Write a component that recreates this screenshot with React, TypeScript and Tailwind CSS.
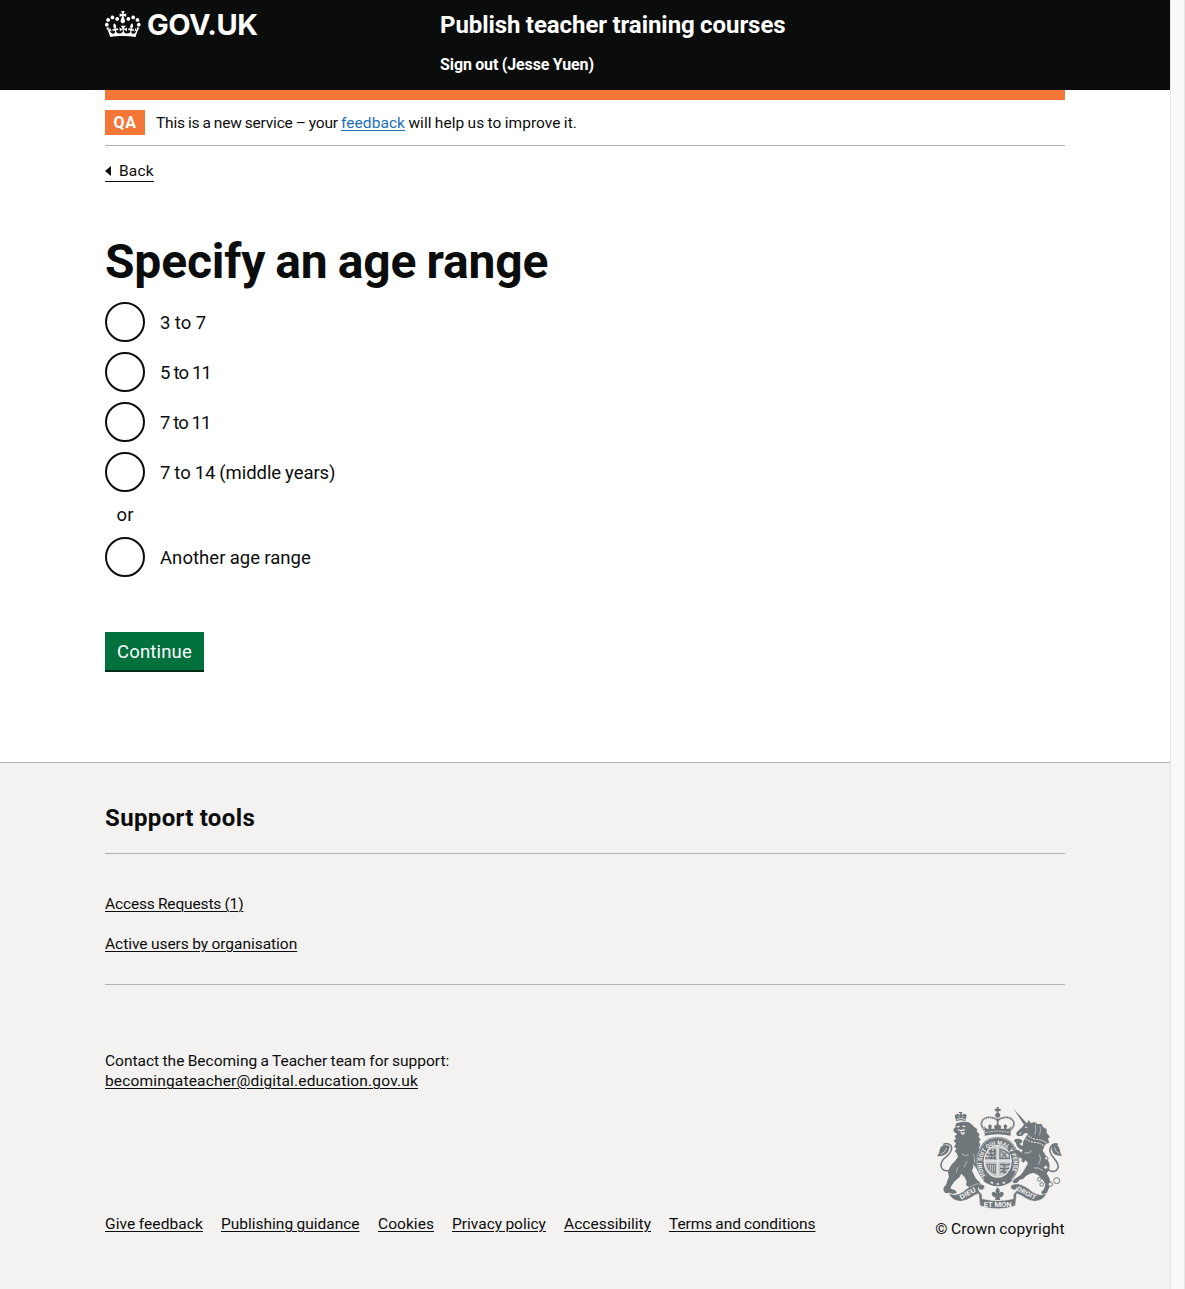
import type { ReactNode } from "react";

const link = "underline underline-offset-2 decoration-1 whitespace-nowrap";

function Crown() {
  return (
    <svg className="h-8 w-9" viewBox="0 0 36 32" fill="currentColor" aria-hidden="true">
      <path
        fillRule="evenodd"
        d="M6.7 12.2c1 .4 2.1-.1 2.5-1s-.1-2.1-1-2.5c-1-.4-2.1.1-2.5 1-.4 1 0 2.1 1 2.5m-4.3 2.5c1 .4 2.1-.1 2.5-1s-.1-2.1-1-2.5c-1-.4-2.1.1-2.5 1-.5 1 0 2.1 1 2.5m-1.3 4.8c1 .4 2.1-.1 2.5-1 .4-1-.1-2.1-1-2.5-1-.4-2.1.1-2.5 1-.4 1 0 2.1 1 2.5m10.4-5.8c1 .4 2.1-.1 2.5-1s-.1-2.1-1-2.5c-1-.4-2.1.1-2.5 1s0 2.1 1 2.5m17.4-1.5c-1 .4-2.1-.1-2.5-1s.1-2.1 1-2.5c1-.4 2.1.1 2.5 1 .5 1 0 2.1-1 2.5m4.3 2.5c-1 .4-2.1-.1-2.5-1s.1-2.1 1-2.5c1-.4 2.1.1 2.5 1 .5 1 0 2.1-1 2.5m1.3 4.8c-1 .4-2.1-.1-2.5-1-.4-1 .1-2.1 1-2.5 1-.4 2.1.1 2.5 1 .4 1 0 2.1-1 2.5m-10.4-5.8c-1 .4-2.1-.1-2.5-1s.1-2.1 1-2.5c1-.4 2.1.1 2.5 1s0 2.1-1 2.5m-5.3-4.9 2.4 1.3V6.500l-2.4.8c-.1-.1-.1-.2-.2-.2s1-3 1-3h-3.400l1 3c-.1.1-.2.1-.2.2-.1.1-2.4-.7-2.4-.7v3.5L17 8.800c-.1.1 0 .2.1.3l-1.400 4.200c-.1.2-.1.4-.1.7 0 1.100.8 2.100 1.900 2.200h.6C19.200 16 20 15.100 20 14c0-.2 0-.4-.1-.7l-1.400-4.200c.2-.1.3-.2.3-.3m-1 20.300c4.600 0 8.900.3 12.800.9 1.100-4.600 2.400-7.200 3.800-9.100l-2.600-.9c.3 1.300.3 1.900 0 2.800-.4-.4-.8-1.100-1.100-2.400l-1.200 4.200c.8-.5 1.400-.9 2-.9-1.200 2.600-2.700 3.200-3.600 3-1.200-.2-1.700-1.300-1.500-2.200.3-1.300 1.600-1.600 2.200-.1 1.200-2.400-.8-3.100-2.100-2.400 1.900-1.900 2.200-3.600.6-5.700-2.200 1.700-2.200 3.300-1.200 5.600-1.300-1.500-3.300-.7-2.500 1.700.9-1.400 2.100-.5 2 .8-.2 1.200-1.700 2.100-3.700 2-2.800-.2-3-2.200-3-3.700.7-.1 1.900.5 3 2l.4-4.400c-1.100 1.200-2.200 1.400-3.300 1.400.4-1.200 2.200-3 2.200-3h-5.400s1.700 1.900 2.200 3c-1.100 0-2.200-.2-3.300-1.400l.4 4.400c1.100-1.500 2.300-2.100 3-2-.1 1.600-.2 3.500-3 3.700-1.900.2-3.500-.8-3.700-2-.2-1.300 1-2.200 1.900-.8.7-2.400-1.300-3.100-2.600-1.700 1-2.300 1-4-1.200-5.600-1.600 2.100-1.300 3.800.6 5.700-1.300-.7-3.200 0-2.100 2.400.6-1.500 1.900-1.100 2.200.1.2.9-.4 1.900-1.500 2.200-1 .2-2.500-.5-3.700-3 .7 0 1.300.4 2 .9L5 20.400c-.3 1.200-.7 1.900-1.200 2.400-.3-.8-.2-1.500 0-2.800l-2.600.9C2.700 22.800 4 25.400 5.100 30c3.800-.5 8.200-.9 12.700-.9"
      />
    </svg>
  );
}

function RoyalArms() {
  const ink = "#6f777b";
  const paper = "#f3f2f1";
  return (
    <svg className="mr-px h-[102px] w-[125px]" viewBox="9 9 375 306" fill={ink} aria-hidden="true">
      {/* lion's crown */}
      <path d="M67 52L62 36Q66 28 74 31L77 33L79 29L75 27V24H85V27L82 29L83 33Q92 27 98 34L94 52Q80 46 67 52z" />
      <path d="M68 46Q80 41 94 46M74 36L76 40M88 36L86 40" stroke={paper} strokeWidth="2.500" fill="none" />
      {/* lion */}
      <path d="M66 58L84 53L102 54L112 60L120 68L130 76L128 82L137 92L133 97L140 108L135 112L139 124L134 130L138 142L142 160L148 178L146 194L152 208L142 214L134 205L126 192L118 180L118 190L114 200L120 212L126 224L139 236L142 246L128 250L116 246L108 251L96 243L98 232L92 220L82 209L76 220L62 232L52 246L50 254L64 259L69 267L54 270L46 266L34 268L28 258L30 248L36 243L40 230L45 219L42 206L46 192L54 180L64 170L72 158L68 148L62 142L68 134L60 128L66 118L59 110L66 104L62 96L70 90L60 84L58 76L64 70z" />
      <path d="M68 69L77 67M85 66L94 68M72 77Q78 82 92 77M80 83L86 91L92 84" stroke={paper} strokeWidth="3.500" fill="none" />
      <path d="M84 150Q96 160 104 152M100 172Q94 178 90 190M118 150Q124 165 122 178M72 190Q66 198 68 206" stroke={paper} strokeWidth="1.500" fill="none" />
      {/* lion's tail */}
      <path d="M50 198Q36 204 26 196Q14 180 30 164Q48 150 52 138Q56 122 42 119Q34 117 28 122" fill="none" stroke={ink} strokeWidth="4.500" />
      <path d="M47 127Q30 118 20 130Q16 138 16 144Q14 152 9 157Q26 158 36 150Q46 142 47 127z" />
      <path d="M20 150Q34 146 38 132" stroke={paper} strokeWidth="2" fill="none" />
      {/* main crown */}
      <g fill="none" stroke={ink}>
        <path d="M152 78Q138 64 144 51Q152 39 168 40Q184 42 191 50Q198 42 214 40Q230 39 238 51Q244 64 230 78" strokeWidth="5.500" strokeDasharray="5 1.200" />
        <path d="M191 44V74" strokeWidth="5.500" strokeDasharray="5 1.200" />
        <path d="M182 18H200M191 9V26" strokeWidth="6.500" />
      </g>
      <circle cx="191" cy="34" r="7.500" />
      <path d="M150 66L158 74L165 74L162 66L168 60L174 66L171 74L182 74L180 66L191 60L202 66L200 74L211 74L208 66L214 60L220 66L217 74L224 74L232 66L228 82H154z" />
      <path d="M152 80Q191 70 230 80V95Q191 86 152 95z" />
      <path d="M156 86Q191 77 226 86" fill="none" stroke={paper} strokeWidth="2.500" strokeDasharray="5 3" />
      {/* garter */}
      <ellipse cx="191" cy="172" rx="65" ry="74" />
      <ellipse cx="191" cy="172" rx="62" ry="71" fill="none" stroke={paper} strokeWidth="1.500" />
      <ellipse cx="191" cy="172" rx="42" ry="49" fill={paper} />
      <path id="garter-arc" d="M155 214A47.500 55.500 0 1 1 227 214" fill="none" />
      <text fill={paper} fontSize="17" fontWeight="700" fontFamily="Roboto, sans-serif" wordSpacing="0">
        <textPath href="#garter-arc" textLength="224" lengthAdjust="spacingAndGlyphs">HONI SOIT QUI MAL Y PENSE</textPath>
      </text>
      {/* quartered shield */}
      <ellipse cx="191" cy="172" rx="39" ry="46" opacity=".35" />
      <g fill="none" stroke={ink} strokeWidth="4.500">
        <path d="M164 140L172 144L186 140M157 151L168 154L186 151M153 163L168 161L187 164M173 135L169 146L174 156L170 166M181 134L184 144L180 154L184 163" />
        <path d="M198 136L214 141L226 149V163H198zM202 142L218 160M218 144L204 160" strokeWidth="3.500" />
        <path d="M198 181L212 184L228 181M198 193L210 195L225 193M198 204L210 202L218 204M208 178L212 188L208 198L212 209" />
        <path d="M158 181H184V208Q164 204 158 181M166 184V198M173 184V204M179 184V206" strokeWidth="3" />
      </g>
      <path d="M191 125V219M149 171H233" stroke={paper} strokeWidth="4" opacity=".7" />
      {/* buckle end of the garter */}
      <path d="M152 222Q191 246 230 222L234 232Q191 262 148 232z" />
      <path d="M170 235L177 238M188 240H195M206 238L213 235" stroke={paper} strokeWidth="5" />
      {/* unicorn's horn */}
      <path d="M239 15L278 57L270 62z" />
      {/* unicorn */}
      <path d="M272 60L280 56L284 48L291 58L302 54L310 60L322 60L328 70L338 76L338 87L348 98L342 104L346 116L336 120L330 130L326 140L334 152L341 166L347 182L345 198L338 208L346 222L350 238L345 252L339 266L326 272L321 264L330 256L334 240L326 227L312 213L298 206L286 210L276 216L268 224L256 228L250 236L238 238L236 230L247 221L259 214L267 204L275 190L282 178L274 168L270 176L262 172L264 164L254 160L248 150L240 146L243 139L254 138L262 146L266 138L256 134L248 126L246 116L240 112L244 105L256 104L266 110L262 117L256 120L266 126L268 112L276 98L282 88L272 88L264 96L250 96L246 88L252 80L264 70z" />
      <path d="M273 71L280 69M262 86L256 90" stroke={paper} strokeWidth="3" />
      <path d="M270 99Q280 112 300 115Q320 116 333 128M277 89Q288 104 308 106Q326 108 339 118" fill="none" stroke={paper} strokeWidth="3" strokeDasharray="6 2.500" />
      <path d="M318 66Q322 80 316 94M304 62Q308 78 302 92" stroke={paper} strokeWidth="1.500" fill="none" />
      <path d="M272 146Q288 150 292 138M316 152Q324 168 312 182M300 192Q314 188 326 200" fill="none" stroke={paper} strokeWidth="2" />
      {/* unicorn's tail */}
      <path d="M342 196Q354 206 366 200Q378 190 368 174Q360 162 352 152Q342 136 354 124Q362 116 372 122" fill="none" stroke={ink} strokeWidth="4.500" />
      <path d="M352 130Q356 116 368 122Q378 130 378 142Q380 152 384 156Q366 156 358 148Q352 140 352 130z" />
      <path d="M361 130Q364 144 376 149" stroke={paper} strokeWidth="2" fill="none" />
      {/* chain */}
      <g fill={paper} stroke={ink} strokeWidth="3">
        <circle cx="337" cy="163" r="5" />
        <circle cx="335" cy="190" r="6" />
        <circle cx="316" cy="226" r="5.500" />
        <circle cx="323" cy="241" r="5.500" />
        <circle cx="349" cy="241" r="6.500" />
        <circle cx="368" cy="230" r="9" />
      </g>
      {/* motto ribbon */}
      <path d="M44 268Q64 278 86 264Q108 244 128 240Q150 238 152 248Q151 258 140 258Q133 256 133 250Q132 262 141 268Q146 272 144 284Q191 296 238 284Q236 272 241 268Q250 262 249 250Q249 256 242 258Q231 258 230 248Q232 238 254 240Q274 244 296 264Q318 278 338 268Q330 290 302 292Q284 290 264 276Q254 270 248 269L244 305Q191 324 138 305L134 269Q128 270 118 276Q98 290 80 292Q52 290 44 268z" stroke={paper} strokeWidth="1.500" />
      <g fill={paper} fontSize="20" fontWeight="700" fontFamily="Roboto, sans-serif" wordSpacing="0">
        <text transform="translate(82 287) rotate(-30)" textLength="52" lengthAdjust="spacingAndGlyphs">DIEU</text>
        <text x="149" y="308" textLength="84" lengthAdjust="spacingAndGlyphs">ET MON</text>
        <text transform="translate(247 259) rotate(28)" textLength="62" lengthAdjust="spacingAndGlyphs">DROIT</text>
      </g>
      {/* fleur-de-lis */}
      <path d="M191 250Q201 259 195 268Q203 260 208 266Q211 274 204 276V280H197L199 288H183L185 280H178V276Q171 274 174 266Q179 260 187 268Q181 259 191 250z" />
    </svg>
  );
}

function Radio({ label, className }: { label: string; className: string }) {
  return (
    <label className="flex h-10 items-center">
      <input type="radio" name="age-range" className="size-10 shrink-0 appearance-none rounded-full border-2 border-[#0b0c0c] bg-white" />
      <span className={`pt-[3px] pl-[15px] text-[18.5px] leading-[25px] ${className}`}>{label}</span>
    </label>
  );
}

function Container({ children, className = "" }: { children: ReactNode; className?: string }) {
  return <div className={`mx-auto w-[960px] ${className}`}>{children}</div>;
}

export default function App() {
  return (
    <div className="flex h-[1289px] w-[1185px] overflow-hidden bg-white font-[Roboto,sans-serif] text-[15.5px] text-[#0b0c0c] [word-spacing:-0.5px]">
      <div className="flex w-[1170px] flex-col">
        <header className="h-[90px] bg-[#0b0c0c] text-white">
          <Container className="flex">
            <div className="flex w-[335px] pt-[7px]">
              <Crown />
              <span className="mt-px ml-[6px] font-[Inter,sans-serif] text-[29px] leading-[34px] font-bold tracking-[-0.5px]">GOV.UK</span>
            </div>
            <div className="pt-[10px] font-bold">
              <div className="text-2xl leading-[30px] tracking-[-0.06px]">Publish teacher training courses</div>
              <div className="mt-[15px] text-base leading-5 tracking-[-0.1px]">Sign out (Jesse Yuen)</div>
            </div>
          </Container>
        </header>

        <Container>
          <div className="h-[10px] bg-[#f47738]" />
          <div className="flex h-[46px] items-start border-b border-[#b1b4b6] pt-[10px]">
            <strong className="flex h-[25px] w-10 items-center justify-center bg-[#f47738] text-base tracking-[0.7px] text-white">QA</strong>
            <p className="ml-[11px] pt-[3px] leading-5 whitespace-pre">
              <span className="tracking-[-0.2px]">This is a new service – your </span>
              <a className={`${link} tracking-[0.06px] text-[#1d70b8]`}>feedback</a>
              <span className="tracking-[0.03px]"> will help us to improve it.</span>
            </p>
          </div>
          <a className="mt-[15px] flex h-[21px] w-[49px] items-center border-b border-[#0b0c0c] leading-5 tracking-[0.2px]">
            <svg className="mr-2 h-[10px] w-[6px]" viewBox="0 0 6 10"><path d="M0 5l6-5v10z" fill="#0b0c0c" /></svg>
            Back
          </a>
        </Container>

        <Container className="pt-[55px]">
          <h1 className="text-[48px] leading-[50px] font-bold tracking-[-0.2px] [word-spacing:-1.5px]">Specify an age range</h1>
          <div className="mt-[15px] flex flex-col gap-[10px]">
            <Radio label="3 to 7" className="tracking-[0.15px]" />
            <Radio label="5 to 11" className="tracking-[-0.8px] [word-spacing:0px]" />
            <Radio label="7 to 11" className="tracking-[-0.9px] [word-spacing:0px]" />
            <Radio label="7 to 14 (middle years)" className="tracking-[-0.07px]" />
            <div className="flex h-[25px] w-10 items-center justify-center pt-[2px] text-[18.5px]">or</div>
            <Radio label="Another age range" className="tracking-[0.05px]" />
          </div>
          <button className="mt-[55px] block h-10 w-[99px] border-b-2 border-[#002d18] bg-[#00703c] pt-[2px] text-[18.5px] leading-[36px] tracking-[0.17px] text-white">
            Continue
          </button>
        </Container>

        <footer className="mt-[90px] flex-1 border-t border-[#b1b4b6] bg-[#f3f2f1]">
          <Container>
            <h2 className="pt-10 text-2xl leading-[30px] font-bold tracking-[0.37px]">Support tools</h2>
            <div className="mt-5 flex h-[132px] flex-col gap-5 border-y border-[#b1b4b6] pt-10 leading-5">
              <a className={`${link} self-start tracking-[-0.14px]`}>Access Requests (1)</a>
              <a className={`${link} self-start tracking-[-0.02px]`}>Active users by organisation</a>
            </div>
            <div className="mt-[66px] leading-5">
              <p>Contact the Becoming a Teacher team for support:</p>
              <a className={`${link} tracking-[0.17px]`}>becomingateacher@digital.education.gov.uk</a>
            </div>
            <div className="mt-4 flex items-end justify-between">
              <nav className="mb-[5px] flex leading-5">
                <a className={`${link} w-[116px] tracking-[0.09px]`}>Give feedback</a>
                <a className={`${link} w-[157px]`}>Publishing guidance</a>
                <a className={`${link} w-[74px] tracking-[0.05px]`}>Cookies</a>
                <a className={`${link} w-[112px]`}>Privacy policy</a>
                <a className={`${link} w-[105px] tracking-[0.02px]`}>Accessibility</a>
                <a className={`${link} tracking-[-0.09px]`}>Terms and conditions</a>
              </nav>
              <div className="flex w-[130px] flex-col items-center leading-5 whitespace-nowrap">
                <RoyalArms />
                <span className="mt-[10px] tracking-[0.12px]">© Crown copyright</span>
              </div>
            </div>
          </Container>
        </footer>
      </div>
      <div className="w-[15px] border-x border-[#e7e7e7] bg-[#fafafa]" />
    </div>
  );
}
